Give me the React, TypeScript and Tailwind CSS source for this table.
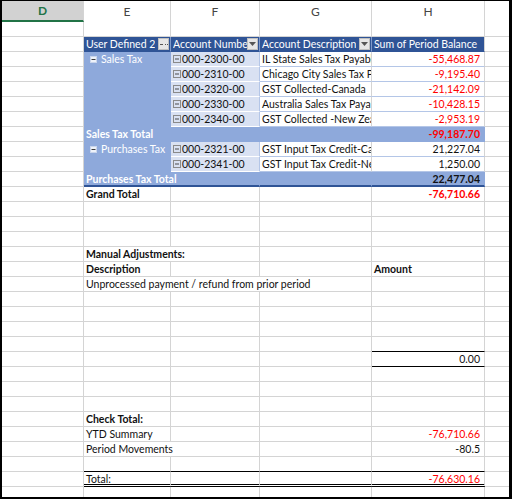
import React from "react";
import { twMerge } from "tailwind-merge";

// column widths (cell width includes its right gridline)
const D = "w-[82px]";
const E = "w-[87px]";
const F = "w-[89px]";
const G = "w-[112px]";
const H = "w-[113px]";
const EF = "w-[176px]";
const EG = "w-[288px]";

const RED = "text-[#ff0000]";
const PIVOT_DARK = "bg-[#2f5496] border-b-[#2f5496] border-r-[#7f99c9] text-white";
const PIVOT_MID = "bg-[#8ea9db] border-b-[#8ea9db] border-r-[#8ea9db]";
const PIVOT_LIGHT = "bg-[#d9e1f2] border-b-white border-r-[#b4c6e7]";
const PIVOT_ROW = "border-b-[#b4c6e7]";

type CellProps = { w: string; className?: string; children?: React.ReactNode };

const Cell = ({ w, className = "", children }: CellProps) => (
  <div
    className={twMerge(
      "h-[15px] shrink-0 overflow-hidden whitespace-nowrap border-r border-b border-[#d4d4d4] px-[2px] leading-[14px]",
      w,
      className
    )}
  >
    {children}
  </div>
);

const Row = ({ children }: { children?: React.ReactNode }) => (
  <div className="flex">
    {children}
    <div className="h-[15px] flex-1 border-b border-[#d4d4d4]" />
  </div>
);

const EmptyRow = () => (
  <Row>
    <Cell w={D} />
    <Cell w={E} />
    <Cell w={F} />
    <Cell w={G} />
    <Cell w={H} />
  </Row>
);

const CollapseLight = () => (
  <svg width="7" height="7" viewBox="0 0 7 7" className="mr-[4px] inline-block shrink-0">
    <rect x="0.5" y="0.5" width="6" height="6" fill="#eef2f9" stroke="#c9d5ec" />
    <line x1="1.5" y1="3.5" x2="5.5" y2="3.5" stroke="#3b3b3b" />
  </svg>
);

const Collapse = () => (
  <svg width="8" height="8" viewBox="0 0 8 8" className="mr-[1px] inline-block shrink-0">
    <rect x="0.5" y="0.5" width="7" height="7" fill="none" stroke="#8a8a8a" />
    <line x1="2" y1="4" x2="6" y2="4" stroke="#4a4a4a" />
  </svg>
);

const DropButton = ({ sorted }: { sorted?: boolean }) => (
  <span className="flex h-[12px] w-[11px] shrink-0 items-center justify-center border border-[#bfbfbf] bg-[#e6e6e6]">
    {sorted ? (
      <svg width="8" height="6" viewBox="0 0 8 6">
        <line x1="0" y1="3.5" x2="3" y2="3.5" stroke="#555" />
        <rect x="5" y="3" width="1" height="1" fill="#555" />
        <rect x="7" y="3" width="1" height="1" fill="#555" />
      </svg>
    ) : (
      <svg width="7" height="4" viewBox="0 0 7 4">
        <polygon points="0,0 7,0 3.5,4" fill="#555" />
      </svg>
    )}
  </span>
);

const HeaderCell = ({ w, label, active }: { w: string; label: string; active?: boolean }) => (
  <div
    className={twMerge(
      "flex h-[21px] shrink-0 items-center justify-center border-r border-[#d4d4d4] text-[12px] text-[#444]",
      w,
      active && "border-b-2 border-b-[#217346] bg-[#d2d2d2] font-bold text-[#217346]"
    )}
  >
    {label}
  </div>
);

type Line = { acct: string; desc: string; amt: string; neg: boolean };

const SALES: Line[] = [
  { acct: "000-2300-00", desc: "IL State Sales Tax Payable", amt: "-55,468.87", neg: true },
  { acct: "000-2310-00", desc: "Chicago City Sales Tax Payable", amt: "-9,195.40", neg: true },
  { acct: "000-2320-00", desc: "GST Collected-Canada", amt: "-21,142.09", neg: true },
  { acct: "000-2330-00", desc: "Australia Sales Tax Payable", amt: "-10,428.15", neg: true },
  { acct: "000-2340-00", desc: "GST Collected -New Zealand", amt: "-2,953.19", neg: true },
];

const PURCHASES: Line[] = [
  { acct: "000-2321-00", desc: "GST Input Tax Credit-Canada", amt: "21,227.04", neg: false },
  { acct: "000-2341-00", desc: "GST Input Tax Credit-New Zealand", amt: "1,250.00", neg: false },
];

const Group = ({ name, lines, total, totalNeg, last }: { name: string; lines: Line[]; total: string; totalNeg: boolean; last?: boolean }) => {
  const edge = last ? "border-b-2 border-b-[#2f5496]" : "";
  return (
    <>
      {lines.map((l, i) => (
        <Row key={l.acct}>
          <Cell w={D} />
          <Cell w={E} className={twMerge(PIVOT_MID, "text-white")}>
            {i === 0 && (
              <span className="flex items-center pl-[4px]">
                <CollapseLight />
                {name}
              </span>
            )}
          </Cell>
          <Cell w={F} className={twMerge(PIVOT_LIGHT, "text-[#111]")}>
            <span className="flex items-center">
              <Collapse />
              {l.acct}
            </span>
          </Cell>
          <Cell w={G} className={twMerge(PIVOT_ROW, "text-[#111]")}>
            {l.desc}
          </Cell>
          <Cell w={H} className={twMerge(PIVOT_ROW, "pr-[4px] text-right", l.neg ? RED : "text-[#111]")}>
            {l.amt}
          </Cell>
        </Row>
      ))}
      <Row>
        <Cell w={D} />
        <Cell w={EF} className={twMerge(PIVOT_MID, "font-bold text-white", edge)}>
          {name} Total
        </Cell>
        <Cell w={G} className={twMerge(PIVOT_MID, edge)} />
        <Cell w={H} className={twMerge(PIVOT_MID, "pr-[4px] text-right font-bold", totalNeg ? RED : "text-[#111]", edge)}>
          {total}
        </Cell>
      </Row>
    </>
  );
};

export default function App() {
  return (
    <div className="h-[499px] w-[512px] overflow-hidden border-t border-r-[3px] border-b-2 border-l-2 border-black bg-white font-['Lato',sans-serif] text-[10.5px] text-[#111]">
      {/* column headers */}
      <div className="flex">
        <HeaderCell w={D} label="D" active />
        <HeaderCell w={E} label="E" />
        <HeaderCell w={F} label="F" />
        <HeaderCell w={G} label="G" />
        <HeaderCell w={H} label="H" />
        <div className="h-[21px] flex-1" />
      </div>

      <EmptyRow />

      {/* pivot header */}
      <Row>
        <Cell w={D} />
        <Cell w={E} className={twMerge(PIVOT_DARK, "flex items-center justify-between pr-[1px]")}>
          <span className="overflow-hidden">User Defined 2</span>
          <DropButton sorted />
        </Cell>
        <Cell w={F} className={twMerge(PIVOT_DARK, "flex items-center justify-between pr-[1px]")}>
          <span className="overflow-hidden">Account Number</span>
          <DropButton />
        </Cell>
        <Cell w={G} className={twMerge(PIVOT_DARK, "flex items-center justify-between pr-[1px]")}>
          <span className="overflow-hidden">Account Description</span>
          <DropButton />
        </Cell>
        <Cell w={H} className={twMerge(PIVOT_DARK, "border-r-[#d4d4d4]")}>
          Sum of Period Balance
        </Cell>
      </Row>

      <Group name="Sales Tax" lines={SALES} total="-99,187.70" totalNeg />
      <Group name="Purchases Tax" lines={PURCHASES} total="22,477.04" totalNeg={false} last />

      <Row>
        <Cell w={D} />
        <Cell w={E} className="font-bold">Grand Total</Cell>
        <Cell w={F} />
        <Cell w={G} />
        <Cell w={H} className={twMerge("pr-[4px] text-right font-bold", RED)}>-76,710.66</Cell>
      </Row>

      <EmptyRow />
      <EmptyRow />
      <EmptyRow />

      {/* manual adjustments */}
      <Row>
        <Cell w={D} />
        <Cell w={EF} className="font-bold">Manual Adjustments:</Cell>
        <Cell w={G} />
        <Cell w={H} />
      </Row>
      <Row>
        <Cell w={D} />
        <Cell w={E} className="font-bold">Description</Cell>
        <Cell w={F} />
        <Cell w={G} />
        <Cell w={H} className="font-bold">Amount</Cell>
      </Row>
      <Row>
        <Cell w={D} />
        <Cell w={EG}>Unprocessed payment / refund from prior period</Cell>
        <Cell w={H} />
      </Row>
      <EmptyRow />
      <EmptyRow />
      <EmptyRow />
      <Row>
        <Cell w={D} />
        <Cell w={E} />
        <Cell w={F} />
        <Cell w={G} />
        <Cell w={H} className="border-b-black" />
      </Row>
      <Row>
        <Cell w={D} />
        <Cell w={E} />
        <Cell w={F} />
        <Cell w={G} />
        <Cell w={H} className="border-b-black pr-[4px] text-right">0.00</Cell>
      </Row>
      <EmptyRow />
      <EmptyRow />
      <EmptyRow />

      {/* check total */}
      <Row>
        <Cell w={D} />
        <Cell w={E} className="font-bold">Check Total:</Cell>
        <Cell w={F} />
        <Cell w={G} />
        <Cell w={H} />
      </Row>
      <Row>
        <Cell w={D} />
        <Cell w={E}>YTD Summary</Cell>
        <Cell w={F} />
        <Cell w={G} />
        <Cell w={H} className={twMerge("pr-[4px] text-right", RED)}>-76,710.66</Cell>
      </Row>
      <Row>
        <Cell w={D} />
        <Cell w={EF}>Period Movements</Cell>
        <Cell w={G} />
        <Cell w={H} className="pr-[4px] text-right">-80.5</Cell>
      </Row>
      <Row>
        <Cell w={D} />
        <Cell w={E} className="border-b-black" />
        <Cell w={F} className="border-b-black" />
        <Cell w={G} className="border-b-black" />
        <Cell w={H} className="border-b-black" />
      </Row>
      <Row>
        <Cell w={D} />
        <Cell w={E} className="border-b-[3px] border-double border-b-black">Total:</Cell>
        <Cell w={F} className="border-b-[3px] border-double border-b-black" />
        <Cell w={G} className="border-b-[3px] border-double border-b-black" />
        <Cell w={H} className={twMerge("border-b-[3px] border-double border-b-black pr-[4px] text-right", RED)}>
          -76,630.16
        </Cell>
      </Row>
      <EmptyRow />
    </div>
  );
}
